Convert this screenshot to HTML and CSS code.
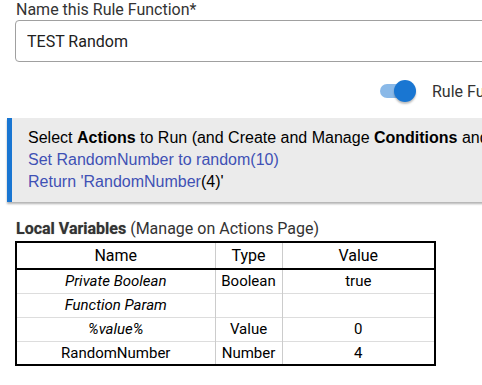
FILE: index.html
```html
<!DOCTYPE html>
<html lang="en">
<head>
    <meta charset="UTF-8">
    <title>Rule Function</title>
    <link rel="stylesheet" href="styles.css">
</head>
<body>
<div class="page">
    <!-- Name field -->
    <label class="field-label" for="fn-name">Name this Rule Function*</label>
    <div class="input-box">
        <input id="fn-name" type="text" value="TEST Random">
    </div>

    <!-- Toggle -->
    <div class="toggle-row">
        <span class="switch">
            <span class="track"></span>
            <span class="thumb"></span>
        </span>
        <span class="toggle-label">Rule Function Logging</span>
    </div>

    <!-- Actions box -->
    <div class="actions">
        <p>Select <b>Actions</b> to Run (and Create and Manage <b>Conditions</b> and Local Variables)</p>
        <p class="link">Set RandomNumber to random(10)</p>
        <p><span class="link">Return 'RandomNumber</span>(4)'</p>
    </div>

    <!-- Local variables -->
    <h4 class="vars-title"><b>Local Variables</b> (Manage on Actions Page)</h4>
    <table class="vars">
        <colgroup>
            <col class="c-name">
            <col class="c-type">
            <col class="c-value">
        </colgroup>
        <thead>
            <tr><th>Name</th><th>Type</th><th>Value</th></tr>
        </thead>
        <tbody>
            <tr><td><i>Private Boolean</i></td><td>Boolean</td><td>true</td></tr>
            <tr><td><i>Function Param</i></td><td></td><td></td></tr>
            <tr><td><i>%value%</i></td><td>Value</td><td>0</td></tr>
            <tr><td>RandomNumber</td><td>Number</td><td>4</td></tr>
        </tbody>
    </table>
</div>
</body>
</html>
```

FILE: styles.css
```css
* {
    margin: 0;
    padding: 0;
    box-sizing: border-box;
}
body {
    font-family: Roboto, 'Noto Sans', sans-serif;
    background-color: #fff;
    color: #212121;
    overflow: hidden;
}
.page {
    width: 640px;
}

/* Name field */
.field-label {
    display: block;
    padding-left: 16px;
    font-size: 16px;
    line-height: 19px;
    color: #333;
}
.input-box {
    margin: 1px 0 0 15px;
    height: 42px;
    border: 1px solid #a0a0a0;
    border-radius: 4px;
    display: flex;
    align-items: center;
}
.input-box input {
    border: none;
    outline: none;
    background: transparent;
    font-family: Roboto, sans-serif;
    font-size: 16px;
    color: #212121;
    padding-left: 11px;
    width: 100%;
}

/* Toggle */
.toggle-row {
    display: flex;
    align-items: center;
    padding-left: 380px;
    margin-top: 18px;
    height: 22px;
}
.switch {
    position: relative;
    width: 34px;
    height: 22px;
    display: inline-block;
}
.track {
    position: absolute;
    left: 0;
    top: 4px;
    width: 34px;
    height: 14px;
    border-radius: 7px;
    background-color: #8ab9e8;
}
.thumb {
    position: absolute;
    left: 14px;
    top: 0;
    width: 22px;
    height: 22px;
    border-radius: 50%;
    background-color: #1976d2;
    box-shadow: 0 2px 2px rgba(0, 0, 0, 0.25);
}
.toggle-label {
    margin-left: 18px;
    font-size: 16px;
    color: #333;
    white-space: nowrap;
}

/* Actions box */
.actions {
    margin: 16px 0 0 7px;
    background-color: #ebebeb;
    border-left: 5px solid #1976d2;
    padding: 9px 0 4px 16px;
    box-shadow: 0 2px 2px rgba(0, 0, 0, 0.3);
    font-family: 'Liberation Sans', Arial, sans-serif;
    font-size: 16px;
    line-height: 22px;
    color: #000;
    white-space: nowrap;
    height: 84px;
}
.actions .link {
    color: #3f51b5;
}

/* Local variables */
.vars-title {
    margin: 16px 0 0 16px;
    font-size: 16px;
    font-weight: 400;
    line-height: 22px;
    color: #333;
}
.vars-title b {
    text-shadow: 0 0 1px rgba(0, 0, 0, 0.4);
}
.vars {
    margin: 1px 0 0 15px;
    width: 419px;
    border-collapse: collapse;
    table-layout: fixed;
    border: 2px solid #000;
    font-size: 16px;
    color: #000;
}
.c-name { width: 199px; }
.c-type { width: 67px; }
.c-value { width: 153px; }
.vars th {
    font-weight: 400;
    height: 27px;
    border-bottom: 2px solid #000;
    border-left: 1px solid #ccc;
}
.vars td {
    height: 24px;
    font-size: 15px;
    text-align: center;
    border-top: 1px solid #ddd;
    border-left: 1px solid #ccc;
    white-space: nowrap;
}
.vars th:first-child,
.vars td:first-child {
    border-left: none;
}
```
